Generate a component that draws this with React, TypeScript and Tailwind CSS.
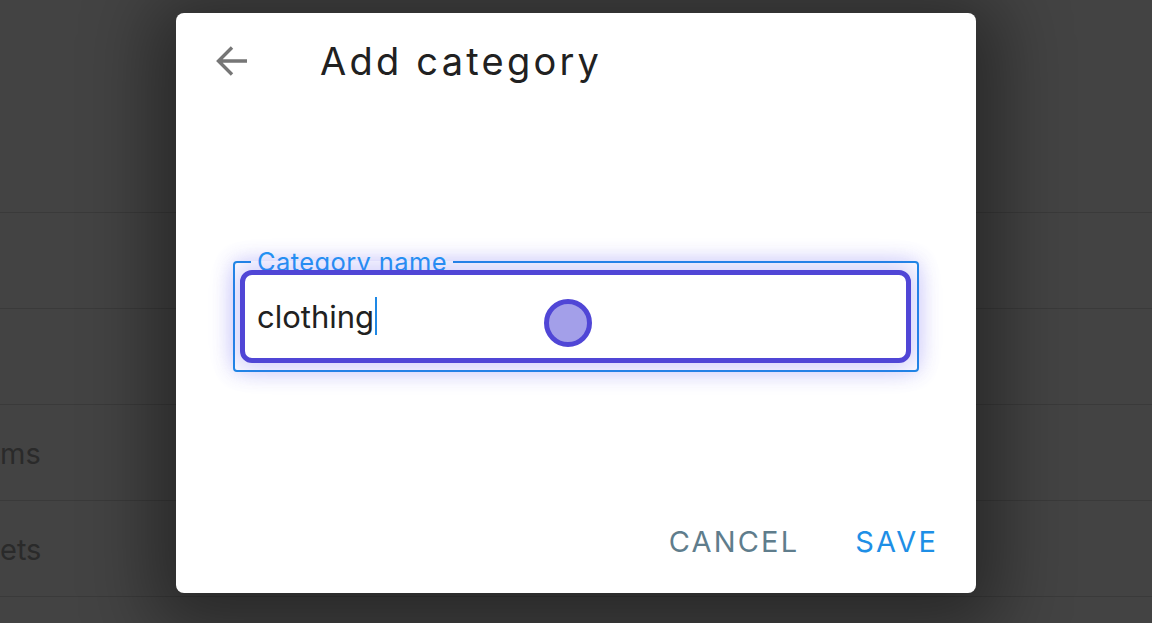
import React from "react";

export default function App() {
  return (
    <div
      className="relative w-[1152px] h-[623px] overflow-hidden bg-[#434343]"
      style={{ fontFamily: "Inter, 'Noto Sans', sans-serif" }}
    >
      {/* background list (dimmed) */}
      <div className="flex flex-col">
        <div className="h-[213px] border-b border-[#3a3a3a]" />
        <div className="h-[96px] border-b border-[#3a3a3a]" />
        <div className="h-[96px] border-b border-[#3a3a3a]" />
        <div className="h-[96px] border-b border-[#3a3a3a] flex items-center pt-[2px]">
          <span className="text-[29px] text-[#2a2a2a] whitespace-nowrap">ms</span>
        </div>
        <div className="h-[96px] border-b border-[#3a3a3a] flex items-center pt-[2px]">
          <span className="text-[29px] text-[#2a2a2a] whitespace-nowrap">ets</span>
        </div>
      </div>

      {/* overlay */}
      <div className="absolute inset-0 flex justify-center pt-[13px]">
        <div className="w-[800px] h-[580px] bg-white rounded-[8px] shadow-[0_12px_70px_24px_rgba(0,0,0,0.4)] flex flex-col">
          <div className="flex items-center h-[96px] pl-[40px]">
            <svg width="32" height="32" viewBox="0 0 32 32">
              <path d="M31 16H3.5M16 2.5L2.5 16 16 29.5" fill="none" stroke="#767676" strokeWidth="3.4" />
            </svg>
            <h1 className="ml-[72px] mt-[-1px] text-[38px] tracking-[0.085em] text-[#212121] font-normal leading-none">
              Add category
            </h1>
          </div>

          <div className="flex-1 flex flex-col justify-center px-[57px]">
            <fieldset className="block border-2 border-[#1e88e5] rounded-[4px] mt-[34px] p-0 shadow-[0_0_18px_4px_rgba(90,80,240,0.12)]">
              <legend className="ml-[16px] px-[6px] h-[2px] text-[25.5px] leading-[2px] text-[#2196f3] tracking-[0.015em] whitespace-nowrap">
                Category name
              </legend>
              <div className="relative h-[93px] mt-[7px] mb-[7px] ml-[5px] mr-[6px] border-[5px] border-[#5046d6] rounded-[12px] bg-white shadow-[0_0_24px_6px_rgba(90,80,240,0.28)] flex items-center pl-[12px]">
                <span className="text-[31px] text-[#212121] leading-none">clothing</span>
                <span className="w-[2px] h-[38px] bg-[#1e88e5] ml-[1px]" />
                <span className="absolute left-[299px] top-[24px] w-[48px] h-[48px] rounded-full bg-[#a39fe9] border-[5px] border-[#5046d6]" />
              </div>
            </fieldset>
          </div>

          <div className="h-[104px] flex items-start justify-end pr-[38px] pt-[38px] gap-[56px]">
            <span className="text-[29px] tracking-[0.075em] text-[#5f7d8c] leading-none">CANCEL</span>
            <span className="text-[29px] tracking-[0.075em] text-[#1e8fe6] leading-none">SAVE</span>
          </div>
        </div>
      </div>
    </div>
  );
}
